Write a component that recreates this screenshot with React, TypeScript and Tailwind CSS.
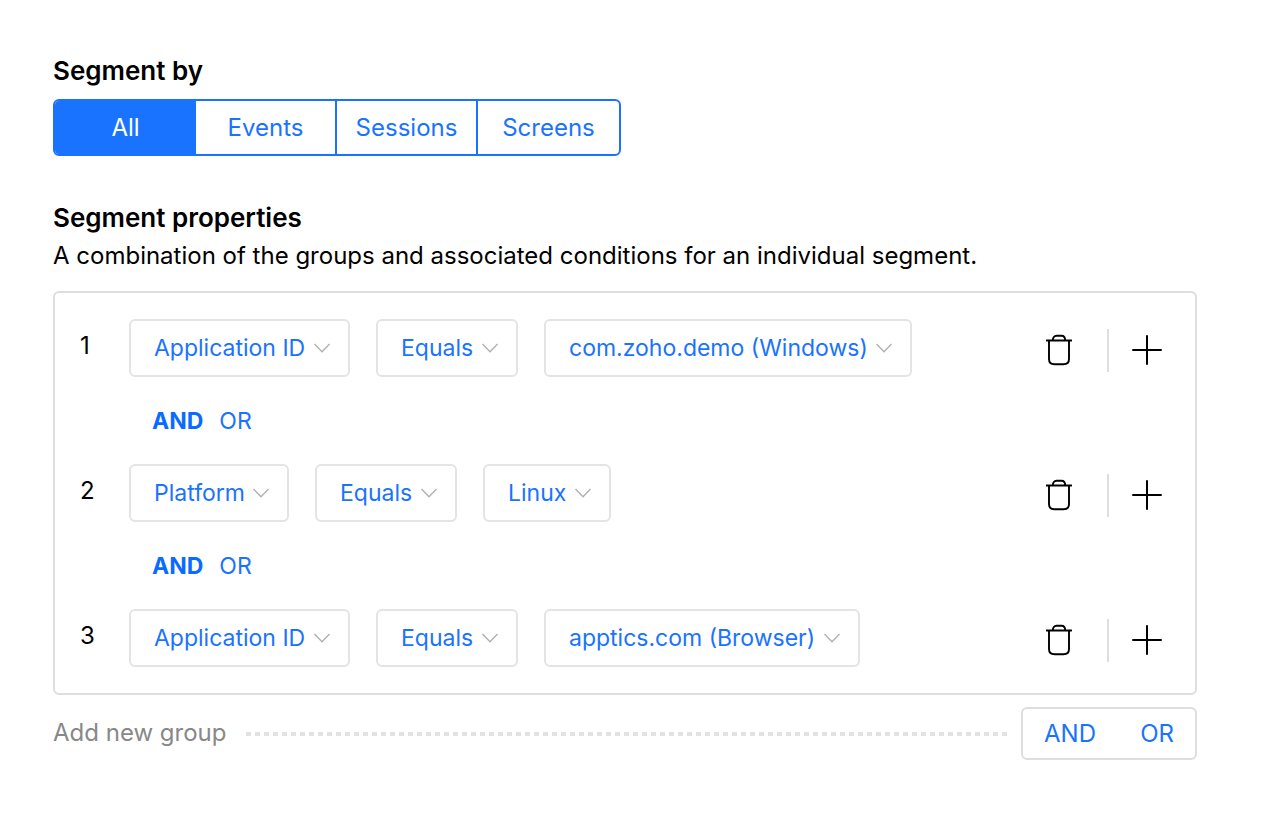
const tabs = ["All", "Events", "Sessions", "Screens"];

const conditions = [
  { id: 1, property: "Application ID", operator: "Equals", value: "com.zoho.demo (Windows)" },
  { id: 2, property: "Platform", operator: "Equals", value: "Linux" },
  { id: 3, property: "Application ID", operator: "Equals", value: "apptics.com (Browser)" },
];

const TrashIcon: React.FC = () => {
  return (
    <svg width="26" height="32" viewBox="0 0 26 32" fill="none" stroke="currentColor" strokeWidth="1.9">
      <path d="M0.500 6.500h25" strokeLinecap="round" />
      <path d="M6.800 6.500C6.800 3.500 8.300 1.800 10.500 1.800h5C17.700 1.800 19.200 3.500 19.200 6.500" />
      <path d="M3 6.500v18.500c0 3.300 2.200 5.300 5.500 5.300h9c3.300 0 5.500-2 5.500-5.300V6.500" />
    </svg>
  );
};

const PlusIcon: React.FC = () => {
  return (
    <svg width="30" height="30" viewBox="0 0 30 30" fill="none" stroke="currentColor" strokeWidth="2" strokeLinecap="round">
      <path d="M15 1v28M1 15h28" />
    </svg>
  );
};

const Dropdown: React.FC<{ label: string; value: string }> = ({ label, value }) => {
  return (
    <label className="flex h-[58px] items-center gap-2 rounded-md border-2 border-[#e4e4e4] pr-[18px] pl-[23px]">
      <select aria-label={label} className="appearance-none bg-transparent text-[#1a73ff] outline-none">
        <option>{value}</option>
      </select>
      <svg width="16" height="10" viewBox="0 0 16 10" fill="none" stroke="#b0b0b0" strokeWidth="1.4">
        <path d="M0.500 1 8 8.700 15.500 1" />
      </svg>
    </label>
  );
};

const Joiner: React.FC = () => {
  return (
    <div className="flex h-[87px] items-center gap-4 pl-[97px] text-[#1a73ff]">
      <button className="font-bold text-[#0b6bff]">AND</button>
      <button>OR</button>
    </div>
  );
};

export default function App() {
  return (
    <main className="min-h-screen bg-white pt-[55px] pr-[66px] pb-16 pl-[53px] font-['Inter',sans-serif] text-[24px] leading-8 text-black">
      <h2 className="text-[26px] leading-8 font-semibold">Segment by</h2>
      <div className="mt-3 inline-flex overflow-hidden rounded-md border-2 border-[#1a73ff]">
        {tabs.map((tab, i) => (
          <button
            key={tab}
            className={
              i === 0
                ? "h-[53px] w-[141px] bg-[#1a73ff] text-white"
                : "h-[53px] w-[141px] border-r-2 border-[#1a73ff] text-[#1a73ff] last:border-r-0"
            }
          >
            {tab}
          </button>
        ))}
      </div>

      <h2 className="mt-[46px] text-[26px] leading-8 font-semibold">Segment properties</h2>
      <p className="mt-1.5">A combination of the groups and associated conditions for an individual segment.</p>

      <section className="mt-[19px] rounded-md border-2 border-[#dedede] py-[26px] text-[23px]">
        {conditions.map((item, i) => (
          <div key={item.id}>
            {i > 0 && <Joiner />}
            <div className="flex items-center pr-[33px] pl-[25px]">
              <span className="w-[49px] pb-1 text-[24px]">{item.id}</span>
              <div className="flex flex-1 gap-[26px]">
                <Dropdown label="Property" value={item.property} />
                <Dropdown label="Operator" value={item.operator} />
                <Dropdown label="Value" value={item.value} />
              </div>
              <div className="flex items-center pt-1">
                <button aria-label="Delete condition">
                  <TrashIcon />
                </button>
                <span className="mr-[23px] ml-[35px] h-[43px] w-0.5 bg-[#dedede]" />
                <button aria-label="Add condition">
                  <PlusIcon />
                </button>
              </div>
            </div>
          </div>
        ))}
      </section>

      <div className="mt-3 flex items-center">
        <span className="pb-0.5 text-[#888888]">Add new group</span>
        <span className="mr-[14px] ml-5 h-1 flex-1 bg-[repeating-linear-gradient(90deg,#e2e2e2_0_5px,transparent_5px_9px)]" />
        <div className="flex h-[53px] w-[176px] items-center justify-between rounded-md border-2 border-[#dedede] px-[21px] text-[#1a73ff]">
          <button>AND</button>
          <button>OR</button>
        </div>
      </div>
    </main>
  );
}
